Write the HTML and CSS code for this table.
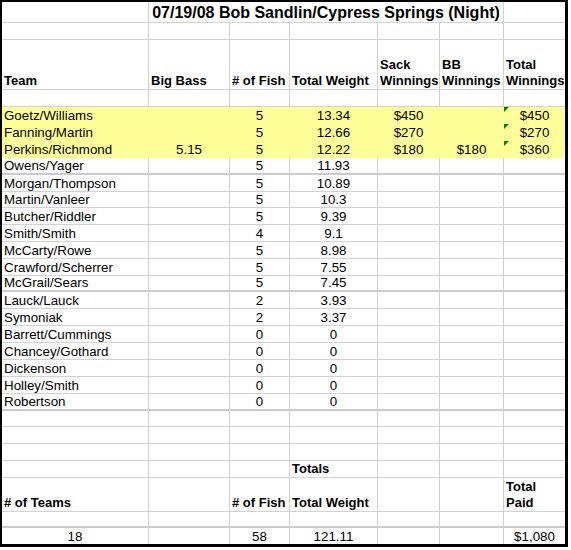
FILE: index.html
```html
<!DOCTYPE html>
<html lang="en">
<head>
<meta charset="utf-8">
<title>07/19/08 Bob Sandlin/Cypress Springs (Night)</title>
<link rel="stylesheet" href="styles.css">
</head>
<body>
<div class="sheet">
  <!-- row 1 -->
  <div class="c"></div>
  <div class="c title">07/19/08 Bob Sandlin/Cypress Springs (Night)</div>
  <div class="c g"></div>
  <!-- row 2 -->
  <div class="c"></div><div class="c"></div><div class="c"></div><div class="c"></div><div class="c"></div><div class="c"></div><div class="c g"></div>
  <!-- row 3 header -->
  <div class="c h">Team</div>
  <div class="c h">Big Bass</div>
  <div class="c h"># of Fish</div>
  <div class="c h">Total Weight</div>
  <div class="c h">Sack<br>Winnings</div>
  <div class="c h">BB<br>Winnings</div>
  <div class="c h g">Total<br>Winnings</div>
  <!-- row 4 -->
  <div class="c"></div><div class="c"></div><div class="c"></div><div class="c"></div><div class="c"></div><div class="c"></div><div class="c g"></div>
  <!-- highlighted rows -->
  <div class="c hl">Goetz/Williams</div><div class="c hl n"></div><div class="c hl n">5</div><div class="c hl n">13.34</div><div class="c hl n">$450</div><div class="c hl n"></div><div class="c hl n g flag">$450</div>
  <div class="c hl">Fanning/Martin</div><div class="c hl n"></div><div class="c hl n">5</div><div class="c hl n">12.66</div><div class="c hl n">$270</div><div class="c hl n"></div><div class="c hl n g flag">$270</div>
  <div class="c hl">Perkins/Richmond</div><div class="c hl n">5.15</div><div class="c hl n">5</div><div class="c hl n">12.22</div><div class="c hl n">$180</div><div class="c hl n">$180</div><div class="c hl n g flag">$360</div>
  <!-- other teams -->
  <div class="c tk">Owens/Yager</div><div class="c tk n"></div><div class="c tk n">5</div><div class="c tk n">11.93</div><div class="c tk"></div><div class="c tk"></div><div class="c tk g"></div>
  <div class="c">Morgan/Thompson</div><div class="c n"></div><div class="c n">5</div><div class="c n">10.89</div><div class="c"></div><div class="c"></div><div class="c g"></div>
  <div class="c">Martin/Vanleer</div><div class="c n"></div><div class="c n">5</div><div class="c n">10.3</div><div class="c"></div><div class="c"></div><div class="c g"></div>
  <div class="c">Butcher/Riddler</div><div class="c n"></div><div class="c n">5</div><div class="c n">9.39</div><div class="c"></div><div class="c"></div><div class="c g"></div>
  <div class="c">Smith/Smith</div><div class="c n"></div><div class="c n">4</div><div class="c n">9.1</div><div class="c"></div><div class="c"></div><div class="c g"></div>
  <div class="c">McCarty/Rowe</div><div class="c n"></div><div class="c n">5</div><div class="c n">8.98</div><div class="c"></div><div class="c"></div><div class="c g"></div>
  <div class="c">Crawford/Scherrer</div><div class="c n"></div><div class="c n">5</div><div class="c n">7.55</div><div class="c"></div><div class="c"></div><div class="c g"></div>
  <div class="c tk">McGrail/Sears</div><div class="c tk n"></div><div class="c tk n">5</div><div class="c tk n">7.45</div><div class="c tk"></div><div class="c tk"></div><div class="c tk g"></div>
  <div class="c">Lauck/Lauck</div><div class="c n"></div><div class="c n">2</div><div class="c n">3.93</div><div class="c"></div><div class="c"></div><div class="c g"></div>
  <div class="c">Symoniak</div><div class="c n"></div><div class="c n">2</div><div class="c n">3.37</div><div class="c"></div><div class="c"></div><div class="c g"></div>
  <div class="c">Barrett/Cummings</div><div class="c n"></div><div class="c n">0</div><div class="c n">0</div><div class="c"></div><div class="c"></div><div class="c g"></div>
  <div class="c">Chancey/Gothard</div><div class="c n"></div><div class="c n">0</div><div class="c n">0</div><div class="c"></div><div class="c"></div><div class="c g"></div>
  <div class="c">Dickenson</div><div class="c n"></div><div class="c n">0</div><div class="c n">0</div><div class="c"></div><div class="c"></div><div class="c g"></div>
  <div class="c">Holley/Smith</div><div class="c n"></div><div class="c n">0</div><div class="c n">0</div><div class="c"></div><div class="c"></div><div class="c g"></div>
  <div class="c tk">Robertson</div><div class="c tk n"></div><div class="c tk n">0</div><div class="c tk n">0</div><div class="c tk"></div><div class="c tk"></div><div class="c tk g"></div>
  <!-- blank rows -->
  <div class="c"></div><div class="c"></div><div class="c"></div><div class="c"></div><div class="c"></div><div class="c"></div><div class="c g"></div>
  <div class="c"></div><div class="c"></div><div class="c"></div><div class="c"></div><div class="c"></div><div class="c"></div><div class="c g"></div>
  <div class="c"></div><div class="c"></div><div class="c"></div><div class="c"></div><div class="c"></div><div class="c"></div><div class="c g"></div>
  <!-- totals -->
  <div class="c"></div><div class="c"></div><div class="c"></div><div class="c h">Totals</div><div class="c"></div><div class="c"></div><div class="c g"></div>
  <div class="c h"># of Teams</div><div class="c h"></div><div class="c h"># of Fish</div><div class="c h">Total Weight</div><div class="c h"></div><div class="c h"></div><div class="c h g">Total<br>Paid</div>
  <div class="c tk"></div><div class="c tk"></div><div class="c tk"></div><div class="c tk"></div><div class="c tk"></div><div class="c tk"></div><div class="c tk g"></div>
  <div class="c n end">18</div><div class="c n end"></div><div class="c n end">58</div><div class="c n end">121.11</div><div class="c n end"></div><div class="c n end"></div><div class="c n end g">$1,080</div>
</div>
</body>
</html>
```
FILE: styles.css
```css
html, body {
  margin: 0;
  padding: 0;
  background: #ffffff;
}

body {
  font-family: "Liberation Sans", Arial, sans-serif;
  font-size: 10pt;
  color: #000000;
}

.sheet {
  display: grid;
  box-sizing: border-box;
  width: 568px;
  border-style: solid;
  border-color: #000000;
  border-width: 2px 3px 3px 2px;
  grid-template-columns: 147px 81px 60px 88px 62px 64px 61px;
  grid-template-rows:
    21px 17px 50px 17px
    17px 17px 17px
    17px 17px 16px 17px 17px 17px 17px 16px
    17px 17px 17px 17px 17px 17px 17px
    16px 17px 17px 17px 34px 16px 16px;
}

.c {
  box-sizing: border-box;
  position: relative;
  display: flex;
  align-items: flex-end;
  justify-content: flex-start;
  min-width: 0;
  padding: 0 2px;
  line-height: 15px;
  white-space: nowrap;
  border-right: 1px solid #d2d2d2;
  border-bottom: 1px solid #d2d2d2;
}

.g {
  border-right: none;
}

.n {
  justify-content: center;
}

.h {
  font-weight: bold;
  font-size: 13px;
  line-height: 16px;
}

.title {
  grid-column: span 5;
  justify-content: center;
  font-weight: bold;
  font-size: 12pt;
  line-height: 18px;
}

.hl {
  background: #ffff99;
  border-color: #ffff99;
}

.tk {
  border-bottom: 2px solid #cbcbcb;
}

.end {
  border-bottom: none;
}

.flag::before {
  content: "";
  position: absolute;
  left: 0;
  top: 0;
  width: 0;
  height: 0;
  border-top: 5px solid #008000;
  border-right: 5px solid transparent;
}
```
